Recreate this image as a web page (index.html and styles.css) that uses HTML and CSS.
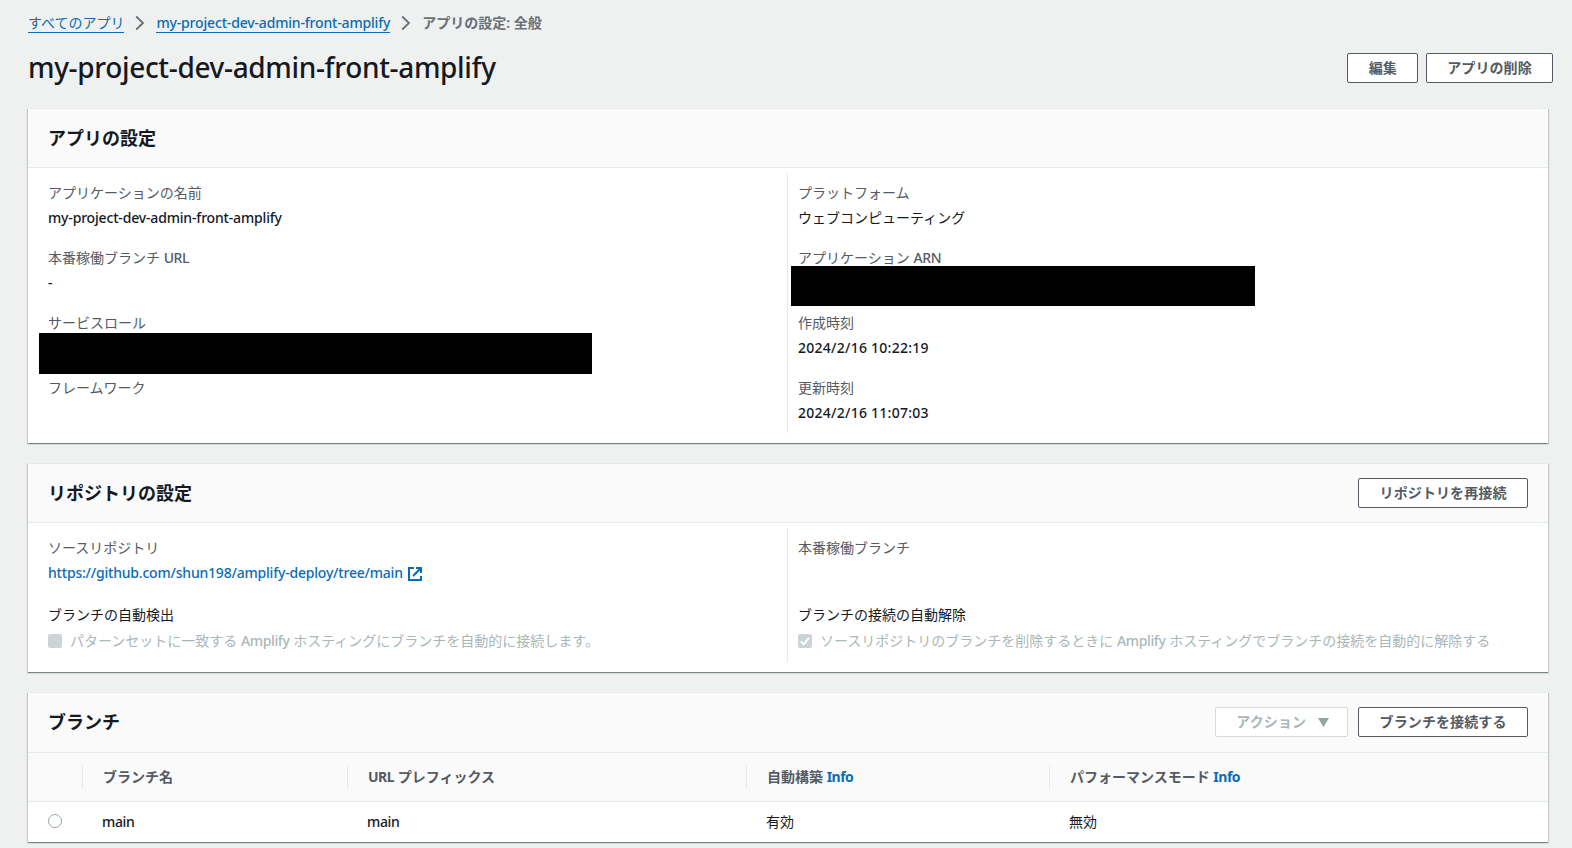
FILE: index.html
```html
<!DOCTYPE html>
<html lang="ja">
<head>
<meta charset="utf-8">
<title>アプリの設定: 全般</title>
<link rel="stylesheet" href="styles.css">
</head>
<body>
<nav class="crumbs">
  <a class="crumb-link" href="#">すべてのアプリ</a>
  <svg class="chevron" width="10" height="16" viewBox="0 0 10 16"><path d="M1.2 1.5 8 8l-6.8 6.5"/></svg>
  <a class="crumb-link lat-name" href="#">my-project-dev-admin-front-amplify</a>
  <svg class="chevron" width="10" height="16" viewBox="0 0 10 16"><path d="M1.2 1.5 8 8l-6.8 6.5"/></svg>
  <span class="crumb-current">アプリの設定: 全般</span>
</nav>
<header class="page-head">
  <h1 class="page-title">my-project-dev-admin-front-amplify</h1>
  <div class="page-actions">
    <button class="btn">編集</button>
    <button class="btn">アプリの削除</button>
  </div>
</header>
<main class="cards">
  <section class="card">
    <div class="card-head"><h2 class="card-title">アプリの設定</h2></div>
    <div class="columns">
      <dl class="col">
        <div class="field"><dt>アプリケーションの名前</dt><dd class="lat-name">my-project-dev-admin-front-amplify</dd></div>
        <div class="field"><dt>本番稼働ブランチ <span class="lat">URL</span></dt><dd class="dash">-</dd></div>
        <div class="field"><dt>サービスロール</dt><dd class="redacted redacted-role"></dd></div>
        <div class="field"><dt>フレームワーク</dt><dd></dd></div>
      </dl>
      <dl class="col">
        <div class="field"><dt>プラットフォーム</dt><dd>ウェブコンピューティング</dd></div>
        <div class="field"><dt>アプリケーション <span class="lat">ARN</span></dt><dd class="redacted redacted-arn"></dd></div>
        <div class="field"><dt>作成時刻</dt><dd class="time">2024/2/16 10:22:19</dd></div>
        <div class="field"><dt>更新時刻</dt><dd class="time">2024/2/16 11:07:03</dd></div>
      </dl>
    </div>
  </section>
  <section class="card">
    <div class="card-head">
      <h2 class="card-title">リポジトリの設定</h2>
      <button class="btn">リポジトリを再接続</button>
    </div>
    <div class="columns columns-repo">
      <dl class="col">
        <div class="field field-repo"><dt>ソースリポジトリ</dt><dd><a class="repo-link" href="#"><span class="repo-url">https://github.com/shun198/amplify-deploy/tree/main</span><svg class="external" width="16" height="16" viewBox="0 0 16 16"><path d="M7 2H2v12h12V10M9 2H14v5M14 2 6 10"/></svg></a></dd></div>
        <div class="field"><dt class="strong">ブランチの自動検出</dt><dd class="check"><span class="box"></span><span>パターンセットに一致する <span class="lat">Amplify</span> ホスティングにブランチを自動的に接続します。</span></dd></div>
      </dl>
      <dl class="col">
        <div class="field field-repo"><dt>本番稼働ブランチ</dt><dd></dd></div>
        <div class="field"><dt class="strong">ブランチの接続の自動解除</dt><dd class="check"><span class="box"><svg width="14" height="14" viewBox="0 0 14 14"><path d="M2.800 7.400 5.700 10.300 11 3.800"/></svg></span><span>ソースリポジトリのブランチを削除するときに <span class="lat">Amplify</span> ホスティングでブランチの接続を自動的に解除する</span></dd></div>
      </dl>
    </div>
  </section>
  <section class="card">
    <div class="card-head card-head-table">
      <h2 class="card-title">ブランチ</h2>
      <div class="card-actions">
        <button class="btn btn-disabled">アクション<svg class="caret" width="11" height="9" viewBox="0 0 11 9"><path d="M0 0h11L5.500 9z"/></svg></button>
        <button class="btn">ブランチを接続する</button>
      </div>
    </div>
    <div class="row row-head">
      <div class="cell"></div>
      <div class="cell">ブランチ名</div>
      <div class="cell"><span class="lat-bold">URL</span> プレフィックス</div>
      <div class="cell">自動構築 <a class="info" href="#">Info</a></div>
      <div class="cell">パフォーマンスモード <a class="info" href="#">Info</a></div>
    </div>
    <div class="row row-body">
      <div class="cell"><span class="radio"></span></div>
      <div class="cell"><span class="lat">main</span></div>
      <div class="cell"><span class="lat">main</span></div>
      <div class="cell">有効</div>
      <div class="cell">無効</div>
    </div>
  </section>
</main>
</body>
</html>
```
FILE: styles.css
```css
* { box-sizing: border-box; }

body {
  margin: 0;
  padding: 12px 24px 0 28px;
  height: 848px;
  overflow: hidden;
  background: #eff1f1;
  color: #16191f;
  font: 14px/22px "Noto Sans", "Noto Sans CJK JP", sans-serif;
}

a { color: #0a6cb4; text-decoration: none; }
h1, h2, dl, dt, dd { margin: 0; }

.lat { font-weight: 500; letter-spacing: -0.35px; }
.lat-bold { letter-spacing: -0.5px; }
.info { letter-spacing: -0.5px; }
.lat-name { font-weight: 500; letter-spacing: -0.17px; }
.dash, .time { font-weight: 500; }
.time { letter-spacing: 0.26px; }
.repo-url { font-weight: 500; letter-spacing: -0.2px; }

.crumbs { display: flex; height: 22px; align-items: center; color: #687078; white-space: nowrap; }
.crumb-link { height: 20px; line-height: 20px; border-bottom: 1px solid #0a6cb4; }
.chevron { margin: 0 11px; fill: none; stroke: #687078; stroke-width: 1.8; }
.crumb-current { font-weight: 600; }

.page-head { display: flex; justify-content: space-between; margin-top: 17px; height: 57px; margin-right: -5px; }
.page-title { font-size: 28px; line-height: 33px; font-weight: 500; letter-spacing: -0.34px; }
.page-actions { display: flex; gap: 8px; padding-top: 2px; }
.page-actions .btn { padding: 0 20.2px; }

.btn {
  height: 30px;
  padding: 0 20.5px;
  border: 1px solid #545b64;
  border-radius: 2px;
  background: #fff;
  color: #545b64;
  font: 700 14px/20px "Noto Sans", "Noto Sans CJK JP", sans-serif;
  letter-spacing: 0.1px;
  white-space: nowrap;
}
.btn-disabled { padding-right: 18px; border-color: #d5dbdb; color: #aab7b8; }
.caret { margin-left: 12px; fill: #95a5a6; }

.cards { display: flex; flex-direction: column; gap: 20px; width: 1520px; }
.card {
  background: #fff;
  border-top: 1px solid #e6eaea;
  box-shadow: 0 1px 1px 0 rgba(0, 28, 36, .3), 1px 1px 1px 0 rgba(0, 28, 36, .15), -1px 1px 1px 0 rgba(0, 28, 36, .15);
}
.card-head {
  display: flex;
  align-items: center;
  justify-content: space-between;
  height: 59px;
  padding: 0 20px;
  background: #fafafa;
  border-bottom: 1px solid #e6e9e9;
}
.card-head-table { height: 60px; padding-bottom: 1px; }
.card-title { font-size: 18px; line-height: 22px; font-weight: 700; }
.card-actions { display: flex; gap: 10px; }

.columns { display: grid; grid-template-columns: 759px 1fr; padding: 5px 0 10px; height: 275px; }
.columns-repo { height: 149px; }
.col { padding: 9px 20px 0; }
.col + .col { padding-left: 10px; border-left: 1px solid #e6e9e9; }
.field { height: 65px; }
.col .field:last-child { height: 55px; }
.field dt { color: #545b64; }
.field dd { margin-top: 3px; height: 22px; white-space: nowrap; }
.field .strong { color: #16191f; }
.field .check { margin-top: 4px; }
.col .field-repo { height: 67px; }
.field .redacted { position: relative; background: #000; }
.field .redacted-role { width: 553px; height: 41px; margin: -1px 0 0 -9px; }
.field .redacted-arn { width: 464px; height: 40px; margin: -3px 0 0 -7px; }

.repo-link { display: flex; align-items: center; }
.external { margin: 2px 0 0 4px; fill: none; stroke: #0a6cb4; stroke-width: 2; }
.check { display: flex; align-items: center; gap: 8px; color: #aab7b8; }
.box { display: flex; width: 14px; height: 14px; border-radius: 2px; background: #ccd5d5; }
.box path { fill: none; stroke: #fff; stroke-width: 2; }

.row { display: grid; grid-template-columns: 54px 265px 399px 303px 1fr; align-items: center; }
.cell { padding-left: 20px; }
.row-head { height: 49px; background: #fafafa; border-bottom: 1px solid #e6e9e9; font-weight: 700; color: #545b64; }
.row-head .cell { height: 24px; line-height: 24px; }
.row-head .cell + .cell { border-left: 1px solid #e6e9e9; }
.row-body { height: 40px; }
.row-body .cell { display: flex; align-items: center; }
.radio { width: 14px; height: 14px; margin-bottom: 2px; border: 1px solid #95a5a6; border-radius: 50%; }
```
